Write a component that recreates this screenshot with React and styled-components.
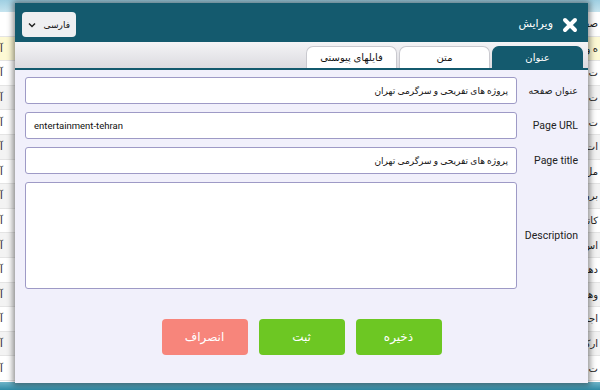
import React from 'react';
import styled, { createGlobalStyle } from 'styled-components';

const Global = createGlobalStyle`
  html, body { margin: 0; padding: 0; }
  body {
    width: 600px;
    height: 390px;
    overflow: hidden;
    background: #ffffff;
    font-family: Roboto, "DejaVu Sans", sans-serif;
  }
`;

const Page = styled.div`
  position: relative;
  width: 600px;
  height: 390px;
  overflow: hidden;
  display: flex;
  flex-direction: column;
  direction: rtl;
`;

const TopStrip = styled.div`
  height: 12px;
  background: linear-gradient(#9fcfe2, #c6e4ef);
  flex-shrink: 0;
`;

const Rows = styled.div`
  flex: 1;
  display: flex;
  flex-direction: column;
`;

const BgRow = styled.div`
  height: 24.6px;
  flex-shrink: 0;
  display: flex;
  justify-content: space-between;
  align-items: center;
  padding: 0 2px 0 0;
  font-size: 10px;
  color: #222;
  background: ${p => (p.$hl ? '#fdf9d4' : p.$alt ? '#f3f3f3' : '#ffffff')};
  border-bottom: 1px solid #e4e4e4;
  box-sizing: border-box;
  white-space: nowrap;
`;

const BottomStrip = styled.div`
  height: 8px;
  flex-shrink: 0;
  background: linear-gradient(#6fb4c8, #2f8aa5);
`;

const Modal = styled.div`
  position: absolute;
  left: 15px;
  top: 3px;
  width: 573px;
  height: 380px;
  background: #f1f0fb;
  box-shadow: 0 0 6px 2px rgba(0, 0, 0, 0.45);
  display: flex;
  flex-direction: column;
  direction: rtl;
`;

const Header = styled.div`
  height: 39px;
  background: #145a6e;
  display: flex;
  align-items: center;
  padding: 0 10px 0 7px;
  gap: 9px;
`;

const CloseIcon = styled.svg`
  width: 16px;
  height: 16px;
  flex-shrink: 0;
  margin-top: 4px;
`;

const Title = styled.span`
  color: #ffffff;
  font-size: 11px;
  margin-top: 1px;
  flex: 1;
`;

const LangSelect = styled.div`
  width: 54px;
  height: 25px;
  box-sizing: border-box;
  background: #efeff1;
  border-radius: 4px;
  display: flex;
  align-items: center;
  justify-content: space-between;
  padding: 0 6px 0 6px;
  font-size: 9px;
  color: #111;
  margin-top: 4px;
`;

const TabBar = styled.div`
  height: 26px;
  background: linear-gradient(#f4f4f6, #dcdbe0);
  border-bottom: 2px solid #145a6e;
  display: flex;
  align-items: flex-end;
  padding: 0 5px;
  gap: 2px;
`;

const Tab = styled.div`
  width: 91px;
  height: 22px;
  box-sizing: border-box;
  border-radius: 7px 7px 0 0;
  display: flex;
  align-items: center;
  justify-content: center;
  font-size: 10px;
  background: ${p => (p.$active ? '#145a6e' : '#ffffff')};
  color: ${p => (p.$active ? '#ffffff' : '#111')};
  border: 1px solid ${p => (p.$active ? '#145a6e' : '#c9c9cf')};
  border-bottom: none;
`;

const Form = styled.div`
  display: grid;
  grid-template-columns: 51px 1fr;
  column-gap: 10px;
  row-gap: 8px;
  padding: 7px 10px 0 10px;
  align-items: center;
`;

const Label = styled.label`
  font-size: ${p => (p.$fa ? '9.5px' : '10.5px')};
  color: #222;
  white-space: nowrap;
  text-align: right;
`;

const Field = styled.div`
  height: ${p => (p.$tall ? '107px' : '27px')};
  box-sizing: border-box;
  background: #ffffff;
  border: 1px solid #9e9ac6;
  border-radius: 3px;
  display: flex;
  align-items: center;
  padding: 0 8px;
  font-size: ${p => (p.$ltr ? '9.5px' : '9px')};
  color: #111;
  direction: ${p => (p.$ltr ? 'ltr' : 'rtl')};
`;

const Actions = styled.div`
  margin-top: 30px;
  display: flex;
  justify-content: center;
  gap: 11px;
`;

const Button = styled.button`
  width: 86px;
  height: 36px;
  border: none;
  border-radius: 4px;
  color: #ffffff;
  font-family: Roboto, "DejaVu Sans", sans-serif;
  font-size: 12px;
  background: ${p => (p.$danger ? '#f7857b' : '#6dc723')};
`;

const bgRows = [
  { r: 'صفحه', l: '' },
  { r: 'ه و', l: 'آ', hl: true },
  { r: 'ت', l: 'آ' },
  { r: 'ت و', l: 'آ', alt: true },
  { r: 'ت ه', l: 'آ' },
  { r: 'ات', l: 'آ', alt: true },
  { r: 'مل', l: 'آ' },
  { r: 'برن', l: 'آ', alt: true },
  { r: 'کاتا', l: 'آ' },
  { r: 'اس', l: 'آ', alt: true },
  { r: 'دها', l: 'آ' },
  { r: 'وها', l: 'آ', alt: true },
  { r: 'اجه', l: 'آ' },
  { r: 'ارکا', l: 'آ', alt: true },
  { r: 'ت و', l: 'آ' },
];

export default function App() {
  return (
    <>
      <Global />
      <Page>
        <TopStrip />
        <Rows>
          {bgRows.map((row, i) => (
            <BgRow key={i} $hl={row.hl} $alt={row.alt}>
              <span>{row.r}</span>
              <span>{row.l}</span>
            </BgRow>
          ))}
        </Rows>
        <BottomStrip />

        <Modal>
          <Header>
            <CloseIcon viewBox="0 0 16 16">
              <path d="M3 3 L13 13 M13 3 L3 13" stroke="#fff" strokeWidth="4" strokeLinecap="round" />
            </CloseIcon>
            <Title>ویرایش</Title>
            <LangSelect>
              <span>فارسی</span>
              <svg width="8" height="6" viewBox="0 0 8 6">
                <path d="M1 1.5 L4 4.5 L7 1.5" stroke="#222" strokeWidth="1.5" fill="none" />
              </svg>
            </LangSelect>
          </Header>

          <TabBar>
            <Tab $active>عنوان</Tab>
            <Tab>متن</Tab>
            <Tab>فایلهای پیوستی</Tab>
          </TabBar>

          <Form>
            <Label $fa>عنوان صفحه</Label>
            <Field>پروژه های تفریحی و سرگرمی تهران</Field>
            <Label>Page URL</Label>
            <Field $ltr>entertainment-tehran</Field>
            <Label>Page title</Label>
            <Field>پروژه های تفریحی و سرگرمی تهران</Field>
            <Label>Description</Label>
            <Field $tall />
          </Form>

          <Actions>
            <Button>ذخیره</Button>
            <Button>ثبت</Button>
            <Button $danger>انصراف</Button>
          </Actions>
        </Modal>
      </Page>
    </>
  );
}
